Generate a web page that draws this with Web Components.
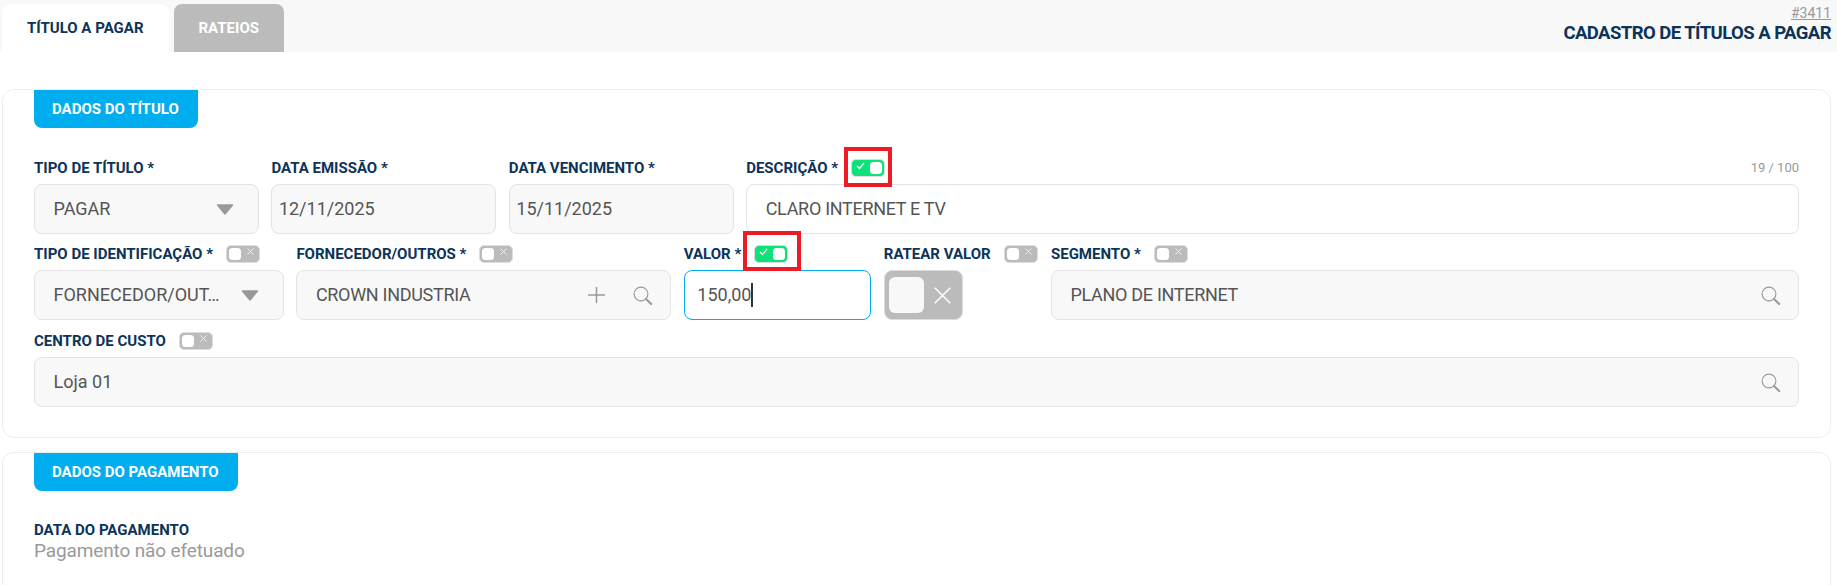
<!DOCTYPE html>
<html lang="pt-BR"><head><meta charset="utf-8"><title>Cadastro de títulos a pagar</title>
<style>
html,body{margin:0;padding:0;background:#fff;height:585px;overflow:hidden;font-family:Roboto,"Liberation Sans",sans-serif}
</style></head><body>
<app-header>
  <app-tab slot="tabs" active>TÍTULO A PAGAR</app-tab>
  <app-tab slot="tabs">RATEIOS</app-tab>
  <span slot="code">#3411</span>
  <span slot="title">CADASTRO DE TÍTULOS A PAGAR</span>
</app-header>

<app-card heading="DADOS DO TÍTULO" style="margin-top:37px;height:349px">
  <form-row cols="225px 225px 225px 1fr">
    <form-field label="TIPO DE TÍTULO *"><form-control pad="20" icon="arrow">PAGAR</form-control></form-field>
    <form-field label="DATA EMISSÃO *"><form-control pad="8">12/11/2025</form-control></form-field>
    <form-field label="DATA VENCIMENTO *"><form-control pad="8">15/11/2025</form-control></form-field>
    <form-field label="DESCRIÇÃO *" counter="19 / 100">
      <app-toggle slot="tools" on mark="d"></app-toggle>
      <form-control pad="20" variant="white" tight>CLARO INTERNET E TV</form-control>
    </form-field>
  </form-row>
  <form-row cols="250px 375px 187.6px 154.8px 1fr">
    <form-field label="TIPO DE IDENTIFICAÇÃO *"><app-toggle slot="tools"></app-toggle><form-control pad="20" icon="arrow">FORNECEDOR/OUT…</form-control></form-field>
    <form-field label="FORNECEDOR/OUTROS *"><app-toggle slot="tools"></app-toggle><form-control pad="20" icon="plus-search" tight>CROWN INDUSTRIA</form-control></form-field>
    <form-field label="VALOR *"><app-toggle slot="tools" on mark="v"></app-toggle><form-control pad="14" variant="focus">150,00<text-caret></text-caret></form-control></form-field>
    <form-field label="RATEAR VALOR"><app-toggle slot="tools"></app-toggle><big-toggle></big-toggle></form-field>
    <form-field label="SEGMENTO *"><app-toggle slot="tools"></app-toggle><form-control pad="20" icon="search" tight>PLANO DE INTERNET</form-control></form-field>
  </form-row>
  <form-row cols="1fr" style="margin-top:1px">
    <form-field label="CENTRO DE CUSTO"><app-toggle slot="tools"></app-toggle><form-control pad="20" icon="search">Loja 01</form-control></form-field>
  </form-row>
</app-card>

<app-card heading="DADOS DO PAGAMENTO" style="margin-top:14px;height:133px;border-bottom:0;border-bottom-left-radius:0;border-bottom-right-radius:0">
  <pay-info label="DATA DO PAGAMENTO">Pagamento não efetuado</pay-info>
</app-card>

<script>
const FONT='Roboto,"Liberation Sans",sans-serif';
const NAVY='#0c3358';
const SEARCH='<svg width="20" height="19" viewBox="0 0 20 19" fill="none"><circle cx="8" cy="8" r="6.9" stroke="#999" stroke-width="1.1"/><path d="M13 13l5.2 5" stroke="#999" stroke-width="2" stroke-linecap="round"/></svg>';
const PLUS='<svg width="17" height="16" viewBox="0 0 17 16" fill="none"><path d="M8.5 0v16M0 8h17" stroke="#999" stroke-width="1.5"/></svg>';
const ARROW='<svg width="18" height="11" viewBox="0 0 18 11"><path d="M1.5 1h15L9 10z" fill="#999" stroke="#999" stroke-width="1.5" stroke-linejoin="round"/></svg>';

function define(name,html,extra){
  customElements.define(name,class extends HTMLElement{
    constructor(){super();const r=this.attachShadow({mode:'open'});r.innerHTML=html;}
    connectedCallback(){extra&&extra(this,this.shadowRoot);}
  });
}

define('app-header',`<style>
:host{display:flex;justify-content:space-between;height:52px;background:#f8f8f8;padding:0 6px 0 2px;font-family:${FONT}}
.tabs{display:flex;gap:5px;padding-top:4px;box-sizing:border-box;height:52px}
.r{display:flex;flex-direction:column;align-items:flex-end}
.code{font-size:14px;line-height:16px;margin-top:5px;color:#999;text-decoration:underline}
.title{font-size:18.5px;letter-spacing:-.55px;font-weight:700;line-height:22px;margin-top:1px;color:${NAVY};white-space:nowrap}
</style><div class="tabs"><slot name="tabs"></slot></div>
<div class="r"><div class="code"><slot name="code"></slot></div><div class="title"><slot name="title"></slot></div></div>`);

define('app-tab',`<style>
:host{display:flex;align-items:center;height:48px;box-sizing:border-box;padding:0 25px;border-radius:8px 8px 0 0;background:#bbb;color:#fff;font:700 15px ${FONT};white-space:nowrap}
:host([active]){background:#fff;color:${NAVY}}
</style><slot></slot>`);

define('app-card',`<style>
:host{display:block;box-sizing:border-box;margin:0 6px 0 2px;padding:0 31px;border:1px solid #eee;border-radius:12px;background:#fff;font-family:${FONT}}
.b{display:inline-flex;align-items:center;height:38px;padding:0 19px 0 18px;background:#00aeef;color:#fff;font:700 15px ${FONT};border-radius:0 0 8px 8px;vertical-align:top}
.body{display:flex;flex-direction:column;gap:10px;padding-top:30px}
</style><div class="b"></div><div class="body"><slot></slot></div>`,(el,r)=>{r.querySelector('.b').textContent=el.getAttribute('heading');});

define('form-row',`<style>:host{display:grid;column-gap:12.4px}</style><slot></slot>`,(el)=>{el.style.gridTemplateColumns=el.getAttribute('cols');});

define('form-field',`<style>
:host{display:block;min-width:0}
.top{display:flex;align-items:center;height:26px;gap:13px;box-sizing:border-box;padding-bottom:6px;white-space:nowrap}
.l{font:700 15px/20px ${FONT};color:${NAVY}}
.c{margin-left:auto;font:400 13px/20px ${FONT};color:#999}
.c:empty{display:none}
</style><div class="top"><span class="l"></span><slot name="tools"></slot><span class="c"></span></div><slot></slot>`,(el,r)=>{
  r.querySelector('.l').textContent=el.getAttribute('label');
  r.querySelector('.c').textContent=el.getAttribute('counter')||'';
});

define('form-control',`<style>
:host{display:flex;align-items:center;height:50px;box-sizing:border-box;border:1.5px solid #e3e3e3;border-radius:8px;background:#f8f8f8;color:#555;font:400 18px ${FONT};white-space:nowrap;padding-right:17px}
:host([variant=white]){background:#fff}
:host([variant=focus]){background:#fff;border-color:#00aeef}
:host([tight]){letter-spacing:-.3px}
.t{flex:1;min-width:0;display:flex;align-items:center;padding-bottom:1px}
.i{display:flex;align-items:center;gap:28px}
</style><div class="t"><slot></slot></div><div class="i"></div>`,(el,r)=>{
  el.style.paddingLeft=(el.getAttribute('pad')-1.5)+'px';
  const ic=el.getAttribute('icon');
  r.querySelector('.i').innerHTML=ic==='arrow'?ARROW:ic==='search'?SEARCH:ic==='plus-search'?PLUS+SEARCH:'';
  if(ic==='arrow')el.style.paddingRight='24px';
});

define('text-caret',`<style>:host{display:inline-block;width:1.5px;height:24px;background:#333}</style>`);

define('app-toggle',`<style>
:host{display:inline-flex;position:relative;align-items:center;width:34px;height:18px;box-sizing:border-box;border:1.5px solid #ddd;border-radius:5px;background:#bbb;padding:0 2px;flex:none;justify-content:space-between}
:host([on]){background:#0ee07a;flex-direction:row-reverse}
.k{width:12px;height:12px;border-radius:3.5px;background:#fff}
.g{display:flex;align-items:flex-start;height:12px;margin-right:3px}
:host([on]) .g{margin:0 0 0 2px}
.mark{display:none;position:absolute;border:4px solid #ed1c24;box-sizing:border-box}
:host([mark=d]) .mark{display:block;left:-8.5px;top:-13px;width:48px;height:40px}
:host([mark=v]) .mark{display:block;left:-12.5px;top:-15px;width:58px;height:40px}
</style><span class="k"></span><span class="g"></span><span class="mark"></span>`,(el,r)=>{
  r.querySelector('.g').innerHTML=el.hasAttribute('on')
   ?'<svg width="9" height="8" viewBox="0 0 9 8" fill="none"><path d="M1 4l2.5 2.5L8 1" stroke="#fff" stroke-width="1.2"/></svg>'
   :'<svg width="7" height="7" viewBox="0 0 7 7" fill="none"><path d="M.5.5l6 6M6.5.5l-6 6" stroke="#eee" stroke-width="1"/></svg>';
});

define('big-toggle',`<style>
:host{display:flex;align-items:center;width:79px;height:50px;box-sizing:border-box;border:1.5px solid #ddd;border-radius:8px;background:#bbb;padding-left:4.5px}
.k{width:35px;height:36px;border-radius:6px;background:#f8f8f8}
svg{margin-left:10px}
</style><span class="k"></span><svg width="17" height="17" viewBox="0 0 17 17" fill="none"><path d="M.7.7l15.6 15.6M16.3.7L.7 16.3" stroke="#fff" stroke-width="1.5"/></svg>`);

define('pay-info',`<style>
:host{display:block;margin-top:-1px}
.l{font:700 15px/20px ${FONT};color:${NAVY}}
.v{font:400 19px/22px ${FONT};letter-spacing:-.13px;color:#999}
</style><div class="l"></div><div class="v"><slot></slot></div>`,(el,r)=>{r.querySelector('.l').textContent=el.getAttribute('label');});
</script>
</body></html>
